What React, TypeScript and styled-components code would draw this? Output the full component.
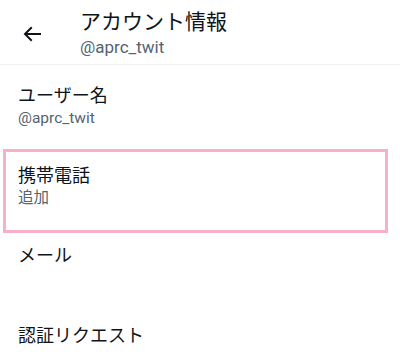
import styled, { createGlobalStyle } from 'styled-components';

const GlobalStyle = createGlobalStyle`
	html, body {
		margin: 0;
		padding: 0;
		background: #ffffff;
	}
	body {
		font-family: Roboto, 'Noto Sans CJK JP', sans-serif;
		color: #0f1419;
	}
`;

const rows = [
	{ title: 'ユーザー名', sub: '@aprc_twit', highlight: false },
	{ title: '携帯電話', sub: '追加', highlight: true },
	{ title: 'メール', sub: '', highlight: false },
	{ title: '認証リクエスト', sub: '', highlight: false },
];

const App = () => {
	return (
		<>
			<GlobalStyle />
			<Page>
				<Header>
					<BackButton aria-label='戻る'>
						<svg viewBox='0 0 24 24' width='24' height='24'>
							<path
								fill='#0f1419'
								d='M7.414 13l5.043 5.04-1.414 1.42L3.586 12l7.457-7.46 1.414 1.42L7.414 11H21v2H7.414z'
							/>
						</svg>
					</BackButton>
					<HeaderText>
						<Title>アカウント情報</Title>
						<Handle>@aprc_twit</Handle>
					</HeaderText>
				</Header>
				<List>
					{rows.map((row) => (
						<Row key={row.title} $highlight={row.highlight}>
							<RowTitle>{row.title}</RowTitle>
							{row.sub && <RowSub>{row.sub}</RowSub>}
						</Row>
					))}
				</List>
			</Page>
		</>
	);
};

const Page = styled.div`
	width: 400px;
	height: 356px;
	overflow: hidden;
	background: #ffffff;
`;

const Header = styled.header`
	display: flex;
	align-items: flex-start;
	height: 65px;
	box-sizing: border-box;
	padding-top: 8px;
	border-bottom: 1px solid #eff3f4;
`;

const BackButton = styled.div`
	width: 24px;
	height: 24px;
	margin: 14px 36px 0 20px;
	svg {
		display: block;
	}
`;

const HeaderText = styled.div`
	display: flex;
	flex-direction: column;
`;

const Title = styled.h1`
	margin: 0;
	font-size: 21px;
	line-height: 28px;
	font-weight: 400;
	color: #0f1419;
`;

const Handle = styled.div`
	font-size: 17px;
	line-height: 22px;
	color: #536471;
`;

const List = styled.div`
	display: flex;
	flex-direction: column;
	padding-top: 4px;
`;

const Row = styled.div<{ $highlight: boolean }>`
	position: relative;
	height: 80px;
	box-sizing: border-box;
	padding: 15px 18px;
	display: flex;
	flex-direction: column;

	&::after {
		content: '';
		display: ${(p) => (p.$highlight ? 'block' : 'none')};
		position: absolute;
		top: 0;
		left: 3px;
		width: 385px;
		height: 84px;
		box-sizing: border-box;
		border: 3px solid #f9afca;
		pointer-events: none;
	}
`;

const RowTitle = styled.div`
	font-size: 18px;
	line-height: 24px;
	color: #0f1419;
`;

const RowSub = styled.div`
	font-size: 15.5px;
	line-height: 20px;
	color: #536471;
`;

export default App;
